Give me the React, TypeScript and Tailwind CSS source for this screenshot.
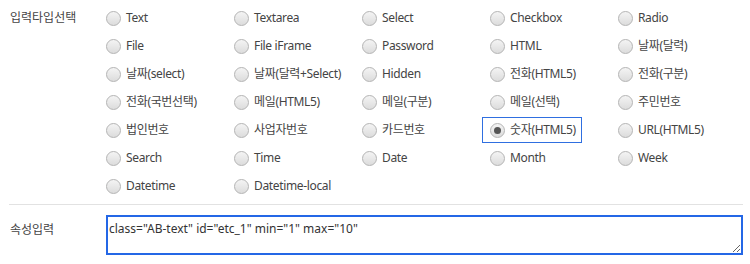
const options = [
  "Text", "Textarea", "Select", "Checkbox", "Radio",
  "File", "File iFrame", "Password", "HTML", "날짜(달력)",
  "날짜(select)", "날짜(달력+Select)", "Hidden", "전화(HTML5)", "전화(구분)",
  "전화(국번선택)", "메일(HTML5)", "메일(구분)", "메일(선택)", "주민번호",
  "법인번호", "사업자번호", "카드번호", "숫자(HTML5)", "URL(HTML5)",
  "Search", "Time", "Date", "Month", "Week",
  "Datetime", "Datetime-local",
];

const selected = "숫자(HTML5)";

function Radio({ checked }: { checked: boolean }) {
  return (
    <span className="w-[15px] h-[15px] rounded-full border border-[#b4b4b4] bg-gradient-to-b from-[#f4f4f4] to-[#dcdcdc] flex items-center justify-center shrink-0">
      {checked && <span className="w-[7px] h-[7px] rounded-full bg-[#555]" />}
    </span>
  );
}

export default function App() {
  return (
    <div
      className="w-[750px] h-[264px] bg-white text-[12px] text-[#444] pl-[9px] pr-[7px]"
      style={{ fontFamily: '"Noto Sans", "Noto Sans CJK KR", sans-serif' }}
    >
      <div className="flex border-b border-[#e2e2e2] pt-[5px] pb-[5px]">
        <div className="w-[89px] shrink-0 pl-[1px] h-[26px] flex items-center">입력타입선택</div>

        <div className="grid grid-cols-[repeat(5,128px)] gap-y-[2px]">
          {options.map((o) => {
            const on = o === selected;
            return (
              <label
                key={o}
                className={
                  "h-[26px] flex items-center gap-[5px] pl-[7px] border w-fit pr-[5px] " +
                  (on ? "border-[#2f6fe0]" : "border-transparent")
                }
              >
                <Radio checked={on} />
                <span className="whitespace-nowrap tracking-[-0.35px]">{o}</span>
              </label>
            );
          })}
        </div>
      </div>

      <div className="flex pt-[10px]">
        <div className="w-[97px] shrink-0 pl-[1px] pt-[4px] h-[26px] flex items-center">속성입력</div>
        <textarea
          className="w-[637px] h-[40px] border-2 border-[#2467e6] outline-none pl-[1px] pt-[3px] text-[12px] text-[#333] leading-[18px]"
          defaultValue={'class="AB-text" id="etc_1" min="1" max="10"'}
        />
      </div>
    </div>
  );
}
